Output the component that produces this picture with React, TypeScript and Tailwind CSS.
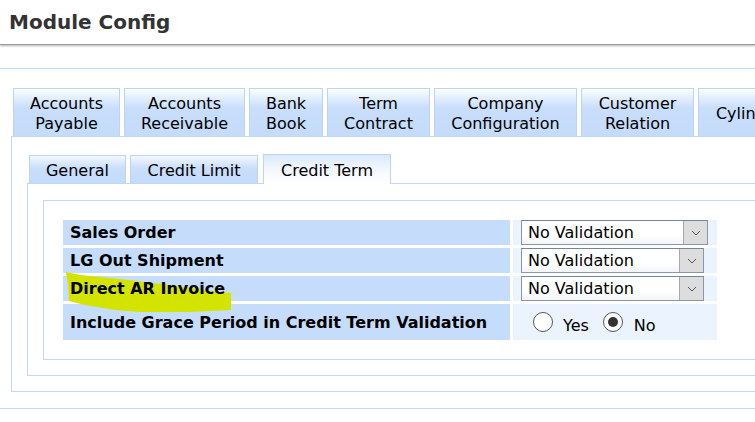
import type { ReactNode } from 'react';

const mainTabs = [
  { label: ['Accounts', 'Payable'], width: 'w-[107px]' },
  { label: ['Accounts', 'Receivable'], width: 'w-[121px]' },
  { label: ['Bank', 'Book'], width: 'w-[74px]' },
  { label: ['Term', 'Contract'], width: 'w-[103px]' },
  { label: ['Company', 'Configuration'], width: 'w-[143px]' },
  { label: ['Customer', 'Relation'], width: 'w-[113px]' },
  { label: ['Cylinder'], width: 'w-[102px]' },
];

function Chevron() {
  return (
    <svg width="10" height="6" viewBox="0 0 10 6" className="text-[#555]">
      <polyline points="1,1 5,5 9,1" fill="none" stroke="currentColor" strokeWidth="1" />
    </svg>
  );
}

function Select({ width }: { width: string }) {
  return (
    <div
      className={`${width} flex h-[25px] items-stretch border border-[#8a96a8] border-t-[#76849a] bg-[linear-gradient(180deg,#ffffff_0%,#ffffff_60%,#f2f5fa_100%)]`}
    >
      <span className="flex-1 pl-[6px] text-[16px] leading-[24px] text-black">No Validation</span>
      <span className="flex w-[24px] items-center justify-center border-l border-[#a9a9a9] bg-[#dddddd]">
        <Chevron />
      </span>
    </div>
  );
}

function Radio({ checked }: { checked?: boolean }) {
  return (
    <span className="flex h-[20px] w-[20px] items-center justify-center rounded-full border border-[#555] bg-white">
      {checked && <span className="h-[10px] w-[10px] rounded-full bg-[#333]" />}
    </span>
  );
}

function Row({ label, height, children }: { label: string; height: string; children: ReactNode }) {
  return (
    <div className={`flex gap-[3px] ${height}`}>
      <div className="flex w-[447px] items-center bg-[#c5dcfb] pl-[7px]">
        <span className="relative z-10 pt-[1px] text-[16px] font-bold text-black">{label}</span>
      </div>
      <div className="flex w-[204px] items-center bg-[#eaf3fe] pl-[8px]">{children}</div>
    </div>
  );
}

export default function App() {
  return (
    <div className="h-[422px] w-[755px] overflow-hidden bg-white font-['Verdana','DejaVu_Sans',sans-serif] text-black">
      <header className="flex h-[45px] items-center border-b border-[#9a9a9a] pl-[9px] shadow-[0_1px_2px_rgba(0,0,0,0.3)]">
        <h1 className="text-[20px] font-bold text-[#333]">Module Config</h1>
      </header>

      <div className="mt-[23px] border-y border-[#c2d7f5] pb-[16px] pt-[19px]">
        <div className="ml-[11px] w-[1000px]">
          <div className="ml-[2px] flex h-[48px] gap-[4px]">
            {mainTabs.map((tab) => (
              <div
                key={tab.label.join(' ')}
                className={`${tab.width} flex flex-col items-center justify-center border border-b-0 border-[#bcd3f3] bg-[linear-gradient(180deg,#fbfdff_0%,#c8defb_40%,#c4dbfa_100%)] pt-[2px] text-[16px] leading-[20px]`}
              >
                {tab.label.map((line) => (
                  <span key={line}>{line}</span>
                ))}
              </div>
            ))}
          </div>

          <div className="border border-[#c2d7f5] px-[15px] pb-[15px] pt-[17px]">
            <div className="ml-[2px] flex items-end">
              <div className="mt-[1px] flex h-[28px] w-[97px] items-center justify-center border border-b-0 border-[#bcd3f3] bg-[linear-gradient(180deg,#f4f8fe_0%,#c8defb_45%,#c4dbfa_100%)] pt-[2px] text-[16px]">
                General
              </div>
              <div className="ml-[4px] flex h-[28px] w-[128px] items-center justify-center border border-b-0 border-[#bcd3f3] bg-[linear-gradient(180deg,#f4f8fe_0%,#c8defb_45%,#c4dbfa_100%)] pt-[2px] text-[16px]">
                Credit Limit
              </div>
              <div className="relative z-10 -mb-px ml-[5px] flex h-[30px] w-[128px] items-center justify-center border border-b-0 border-[#bcd3f3] bg-[linear-gradient(180deg,#d9e8fc_0%,#f4f8fe_50%,#ffffff_100%)] pt-[2px] text-[16px]">
                Credit Term
              </div>
            </div>

            <div className="border border-[#c2d7f5] px-[15px] pb-[15px] pt-[16px]">
              <div className="border border-[#c2d7f5] p-[19px]">
                <div className="relative flex flex-col gap-[3px]">
                  <svg
                    className="absolute left-0 top-0"
                    width="200"
                    height="100"
                    viewBox="0 0 200 100"
                  >
                    <polygon
                      points="3,52 17,55 57,59 107,65 147,71 168,73 168,90 127,92 77,92 52,90 22,85 6,81 5,65"
                      fill="#d2e400"
                    />
                  </svg>
                  <Row label="Sales Order" height="h-[25px]">
                    <Select width="w-[187px]" />
                  </Row>
                  <Row label="LG Out Shipment" height="h-[25px]">
                    <Select width="w-[183px]" />
                  </Row>
                  <Row label="Direct AR Invoice" height="h-[25px]">
                    <Select width="w-[183px]" />
                  </Row>
                  <Row label="Include Grace Period in Credit Term Validation" height="h-[36px]">
                    <div className="flex items-center pl-[12px] text-[16px]">
                      <Radio />
                      <span className="ml-[10px] mt-[7px]">Yes</span>
                      <span className="ml-[14px]">
                        <Radio checked />
                      </span>
                      <span className="ml-[11px] mt-[7px]">No</span>
                    </div>
                  </Row>
                </div>
              </div>
            </div>
          </div>
        </div>
      </div>
    </div>
  );
}
